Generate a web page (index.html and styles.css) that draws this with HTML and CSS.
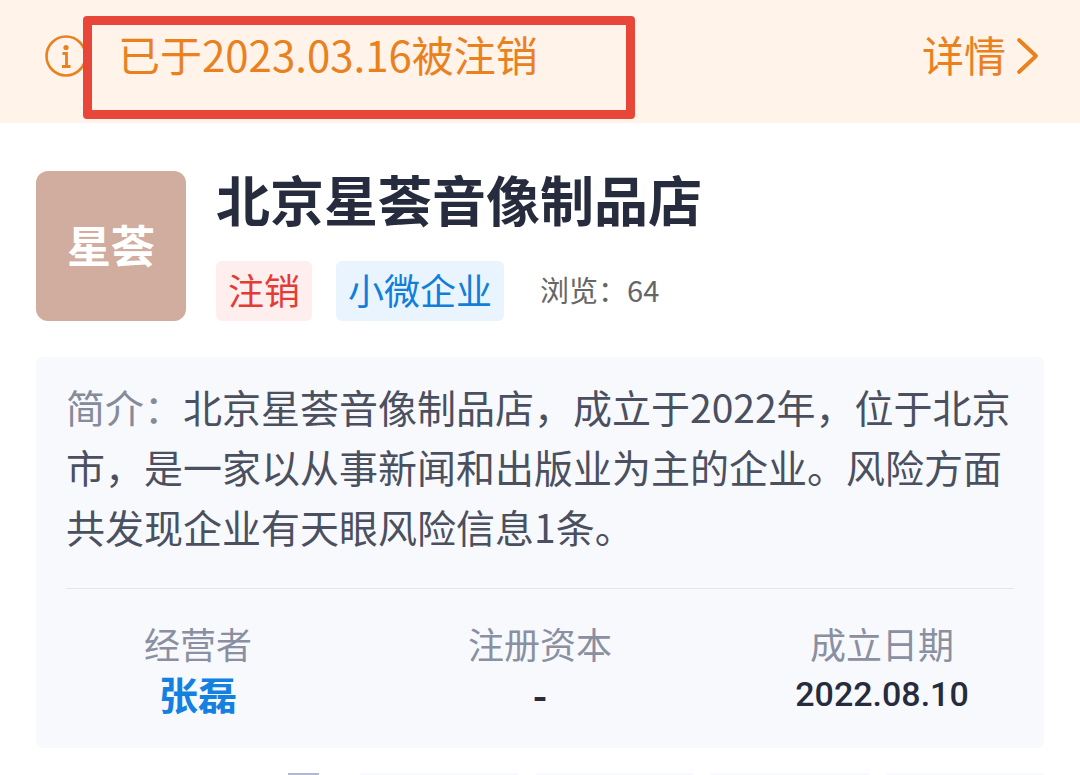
FILE: index.html
```
<!DOCTYPE html>
<html lang="zh-CN">
<head>
    <meta charset="UTF-8">
    <meta name="viewport" content="width=device-width, initial-scale=1.0">
    <title>北京星荟音像制品店</title>
    <link rel="stylesheet" href="styles.css">
</head>
<body>
    <!-- 注销提示 -->
    <div class="notice">
        <svg class="notice-icon" viewBox="0 0 42 42" aria-hidden="true">
            <circle cx="21" cy="21" r="19.5" fill="none" stroke="currentColor" stroke-width="2.6"/>
            <circle cx="21" cy="12.5" r="2.6" fill="currentColor"/>
            <path d="M17.5 18.5h4v13M17 31.5h8.5" fill="none" stroke="currentColor" stroke-width="2.8"/>
        </svg>
        <span class="notice-text">已于2023.03.16被注销</span>
        <a class="notice-link" href="#">
            <span class="notice-text">详情</span>
            <svg class="arrow" viewBox="0 0 24 38" aria-hidden="true">
                <path d="M3 3l17 16L3 35" fill="none" stroke="currentColor" stroke-width="3.8" stroke-linecap="round" stroke-linejoin="round"/>
            </svg>
        </a>
        <div class="mark"></div>
    </div>

    <main>
        <!-- 公司信息 -->
        <header class="company">
            <div class="logo">星荟</div>
            <div class="company-info">
                <h1>北京星荟音像制品店</h1>
                <div class="tags">
                    <span class="tag tag-red">注销</span>
                    <span class="tag tag-blue">小微企业</span>
                    <span class="views">浏览：64</span>
                </div>
            </div>
        </header>

        <!-- 简介 -->
        <section class="card">
            <p class="intro"><span class="intro-label">简介：</span>北京星荟音像制品店，成立于2022年，位于北京市，是一家以从事新闻和出版业为主的企业。风险方面共发现企业有天眼风险信息1条。</p>
            <dl class="stats">
                <div>
                    <dt>经营者</dt>
                    <dd><a href="#">张磊</a></dd>
                </div>
                <div>
                    <dt>注册资本</dt>
                    <dd>-</dd>
                </div>
                <div>
                    <dt>成立日期</dt>
                    <dd class="date">2022.08.10</dd>
                </div>
            </dl>
        </section>

        <div class="next">
            <i class="next-icon"></i>
            <i class="next-card"></i>
            <i class="next-card"></i>
            <i class="next-card"></i>
            <i class="next-card"></i>
        </div>
    </main>
</body>
</html>
```
FILE: styles.css
```
* {
    box-sizing: border-box;
}

body {
    margin: 0;
    background: #fff;
    color: #262c3d;
    font-family: "Noto Sans CJK SC", sans-serif;
}

a {
    color: inherit;
    text-decoration: none;
}

.notice {
    position: relative;
    display: flex;
    align-items: center;
    height: 123px;
    padding: 0 40px 12px 45px;
    background: #fff3ea;
    color: #e9811f;
    font-size: 42px;
    line-height: 60px;
}

.notice-icon {
    width: 42px;
    height: 42px;
    margin-right: 31px;
}

.notice-text {
    padding-bottom: 4px;
}

.notice-link {
    display: flex;
    align-items: center;
    gap: 10px;
    margin-left: auto;
}

.arrow {
    width: 24px;
    height: 38px;
}

/* 红框标注 */
.mark {
    position: absolute;
    left: 83px;
    top: 16px;
    width: 552px;
    height: 103px;
    border: 9px solid #e84638;
    border-radius: 4px;
}

main {
    padding: 0 36px;
}

.company {
    display: flex;
    gap: 30px;
    padding: 48px 0 36px;
}

.logo {
    display: flex;
    align-items: center;
    justify-content: center;
    width: 150px;
    height: 150px;
    padding-bottom: 4px;
    border-radius: 12px;
    background: #d0ad9e;
    color: #fff;
    font-size: 44px;
    font-weight: bold;
}

.company-info {
    display: flex;
    flex-direction: column;
    justify-content: space-between;
}

h1 {
    margin: 0;
    font-size: 54px;
    line-height: 56px;
}

.tags {
    display: flex;
    gap: 24px;
    line-height: 56px;
}

.tag {
    padding: 0 12px 4px;
    border-radius: 6px;
    font-size: 36px;
}

.tag-red {
    background: #ffeeee;
    color: #e23c34;
}

.tag-blue {
    background: #e9f4fe;
    color: #0f7fdb;
}

.views {
    margin-left: 12px;
    color: #666;
    font-size: 29px;
}

.card {
    padding: 19px 30px 30px;
    border-radius: 6px;
    background: #f7f9fd;
}

.intro {
    margin: 0;
    padding-bottom: 32px;
    border-bottom: 1px solid #e3e6ec;
    color: #4b5060;
    font-size: 39px;
    line-height: 60px;
}

.intro-label {
    color: #868b9c;
}

.stats {
    display: grid;
    grid-template-columns: repeat(3, 1fr);
    gap: 78px;
    margin: 29px 0 0;
    text-align: center;
    line-height: 50px;
}

.stats dt {
    color: #8a8fa2;
    font-size: 36px;
}

.stats dd {
    margin: 0;
    font-size: 39px;
    font-weight: bold;
}

.stats dd a {
    color: #1480e0;
}

.stats .date {
    padding-top: 2px;
    font-family: Roboto, sans-serif;
    font-size: 34px;
    font-weight: 500;
    line-height: 48px;
}

/* 下一栏的顶边 */
.next {
    display: flex;
    gap: 18px;
    height: 2px;
    margin-top: 25px;
}

.next-icon {
    width: 31px;
    margin: 0 23px 0 252px;
    background: #b3b9d2;
}

.next-card {
    flex: 1;
    background: #f8f9fd;
}
```
